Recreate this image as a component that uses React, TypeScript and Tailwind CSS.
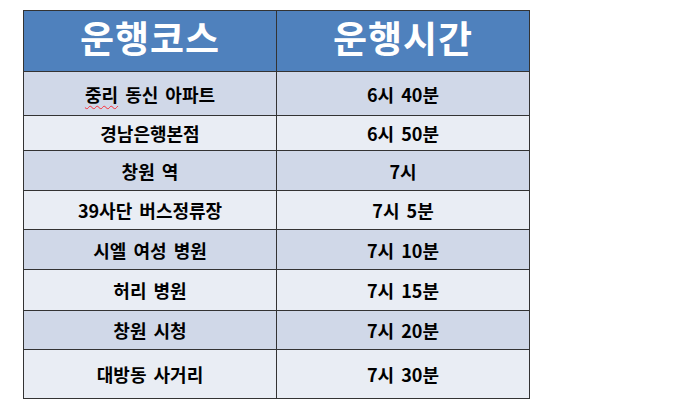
import React from 'react';

const rows = [
    { course: '중리 동신 아파트', time: '6시 40분', h: 'h-[44px]', bg: 'bg-[#d0d8e8]', typo: true },
    { course: '경남은행본점', time: '6시 50분', h: 'h-[35px]', bg: 'bg-[#e9edf4]' },
    { course: '창원 역', time: '7시', h: 'h-[40px]', bg: 'bg-[#d0d8e8]' },
    { course: '39사단 버스정류장', time: '7시 5분', h: 'h-[39px]', bg: 'bg-[#e9edf4]' },
    { course: '시엘 여성 병원', time: '7시 10분', h: 'h-[40px]', bg: 'bg-[#d0d8e8]' },
    { course: '허리 병원', time: '7시 15분', h: 'h-[41px]', bg: 'bg-[#e9edf4]' },
    { course: '창원 시청', time: '7시 20분', h: 'h-[39px]', bg: 'bg-[#d0d8e8]' },
    { course: '대방동 사거리', time: '7시 30분', h: 'h-[49px]', bg: 'bg-[#e9edf4]' },
];

export default function App() {
    return (
        <div className="w-[683px] h-[418px] bg-white pt-[10px] pl-[23px]" style={{ fontFamily: '"Noto Sans CJK KR", "Noto Sans", sans-serif' }}>
            <div className="w-[507px] border border-[#333] flex flex-col">
                <div className="grid grid-cols-[253px_1fr] h-[60px] bg-[#4f81bd] text-white text-[37px] font-bold leading-none tracking-[1px]">
                    <div className="flex items-center justify-center pb-[7px] border-r border-[#333]">운행코스</div>
                    <div className="flex items-center justify-center pb-[7px]">운행시간</div>
                </div>
                {rows.map((r, i) => (
                    <div key={i} className={`grid grid-cols-[253px_1fr] ${r.h} ${r.bg} border-t border-[#333] text-[18px] font-bold text-black leading-none [word-spacing:3px]`}>
                        <div className="flex items-center justify-center border-r border-[#333]">
                            {r.typo ? (
                                <span>
                                    <span className="underline decoration-wavy decoration-red-500 decoration-1 underline-offset-[3px]">중리</span> 동신 아파트
                                </span>
                            ) : r.course}
                        </div>
                        <div className="flex items-center justify-center">{r.time}</div>
                    </div>
                ))}
            </div>
        </div>
    );
}
